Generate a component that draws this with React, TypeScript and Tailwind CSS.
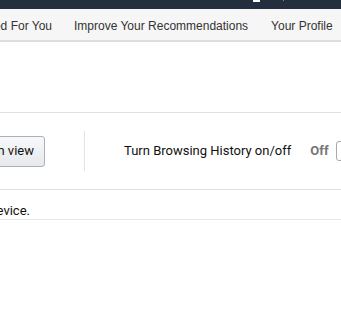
import React from "react";

export default function App() {
  return (
    <div className="w-[341px] h-[323px] overflow-hidden bg-white relative font-[family-name:Arial,'Liberation_Sans',sans-serif]">
      <div className="h-[9px] bg-[#232f3e] relative">
        <div className="absolute left-[253px] top-0 w-[7px] h-[2px] bg-white" />
        <div className="absolute left-[283px] top-0 w-[1px] h-[1px] bg-[#888]" />
      </div>
      <div className="h-[33px] bg-[#f6f6f6] border-b-2 border-[#dddddd] flex items-center whitespace-nowrap text-[12px] text-[#333] pt-[2px]">
        <div className="w-[52px] flex justify-end shrink-0">
          <span>Recommended For You</span>
        </div>
        <span className="ml-[22px]">Improve Your Recommendations</span>
        <span className="ml-[23px]">Your Profile</span>
      </div>
      <div className="text-[13px] text-[#111] font-[family-name:Roboto,sans-serif]">
        <div className="h-[71px] border-b border-[#e0e0e0]" />
        <div className="h-[76px] flex items-center whitespace-nowrap">
          <div className="w-[45px] flex justify-end shrink-0">
            <button className="h-[31px] px-[10px] rounded-[3px] border border-[#adb1b8] bg-gradient-to-b from-[#f7f8fa] to-[#e7e9ec] text-[13px] text-[#111] shrink-0 whitespace-nowrap">Remove from view</button>
          </div>
          <div className="w-px h-[40px] bg-[#e3e3e3] ml-[39px] shrink-0" />
          <span className="ml-[39px]">Turn Browsing History on/off</span>
          <span className="ml-[19px] font-bold text-[#767676]">Off</span>
          <div className="ml-[7px] w-[30px] h-[20px] border border-[#aaa] rounded-[3px] bg-white shrink-0" />
        </div>
        <div className="border-t border-[#e0e0e0] h-[30px] flex items-end pb-[1px] leading-[15px] whitespace-nowrap">
          <div className="w-[30px] flex justify-end shrink-0">
            <span>Your Browsing History is currently turned off on this device.</span>
          </div>
        </div>
        <div className="border-t border-[#e7e7e7]" />
      </div>
    </div>
  );
}
